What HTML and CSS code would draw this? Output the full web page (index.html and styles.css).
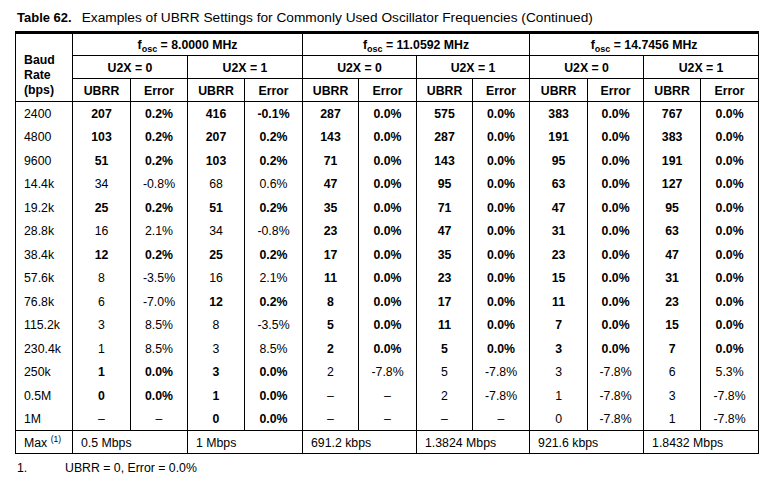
FILE: index.html
```html
<!DOCTYPE html>
<html>
<head>
<meta charset="utf-8">
<link rel="stylesheet" href="styles.css">
</head>
<body>
<div class="page">
  <div class="title"><span class="tnum">Table 62.</span>Examples of UBRR Settings for Commonly Used Oscillator Frequencies (Continued)</div>
  <table class="ubrr">
    <colgroup>
      <col style="width:57px"><col style="width:58px"><col style="width:57px"><col style="width:57px"><col style="width:58px"><col style="width:56px"><col style="width:58px"><col style="width:56px"><col style="width:57px"><col style="width:58px"><col style="width:56px"><col style="width:57px"><col style="width:58px">
    </colgroup>
    <thead>
      <tr class="h1">
        <th rowspan="3" class="label hb">Baud<br>Rate<br>(bps)</th>
        <th colspan="4" class="hb">f<sub>osc</sub> = 8.0000 MHz</th>
        <th colspan="4" class="hb">f<sub>osc</sub> = 11.0592 MHz</th>
        <th colspan="4" class="hb">f<sub>osc</sub> = 14.7456 MHz</th>
      </tr>
      <tr class="h2">
        <th colspan="2" class="hb">U2X = 0</th><th colspan="2" class="hb">U2X = 1</th>
        <th colspan="2" class="hb">U2X = 0</th><th colspan="2" class="hb">U2X = 1</th>
        <th colspan="2" class="hb">U2X = 0</th><th colspan="2" class="hb">U2X = 1</th>
      </tr>
      <tr class="h3">
        <th class="hb">UBRR</th><th class="hb">Error</th><th class="hb">UBRR</th><th class="hb">Error</th>
        <th class="hb">UBRR</th><th class="hb">Error</th><th class="hb">UBRR</th><th class="hb">Error</th>
        <th class="hb">UBRR</th><th class="hb">Error</th><th class="hb">UBRR</th><th class="hb">Error</th>
      </tr>
    </thead>
    <tbody>
      <tr><td class="rate">2400</td><td class="b">207</td><td class="b">0.2%</td><td class="b">416</td><td class="b">-0.1%</td><td class="b">287</td><td class="b">0.0%</td><td class="b">575</td><td class="b">0.0%</td><td class="b">383</td><td class="b">0.0%</td><td class="b">767</td><td class="b">0.0%</td></tr>
      <tr><td class="rate">4800</td><td class="b">103</td><td class="b">0.2%</td><td class="b">207</td><td class="b">0.2%</td><td class="b">143</td><td class="b">0.0%</td><td class="b">287</td><td class="b">0.0%</td><td class="b">191</td><td class="b">0.0%</td><td class="b">383</td><td class="b">0.0%</td></tr>
      <tr><td class="rate">9600</td><td class="b">51</td><td class="b">0.2%</td><td class="b">103</td><td class="b">0.2%</td><td class="b">71</td><td class="b">0.0%</td><td class="b">143</td><td class="b">0.0%</td><td class="b">95</td><td class="b">0.0%</td><td class="b">191</td><td class="b">0.0%</td></tr>
      <tr><td class="rate">14.4k</td><td>34</td><td>-0.8%</td><td>68</td><td>0.6%</td><td class="b">47</td><td class="b">0.0%</td><td class="b">95</td><td class="b">0.0%</td><td class="b">63</td><td class="b">0.0%</td><td class="b">127</td><td class="b">0.0%</td></tr>
      <tr><td class="rate">19.2k</td><td class="b">25</td><td class="b">0.2%</td><td class="b">51</td><td class="b">0.2%</td><td class="b">35</td><td class="b">0.0%</td><td class="b">71</td><td class="b">0.0%</td><td class="b">47</td><td class="b">0.0%</td><td class="b">95</td><td class="b">0.0%</td></tr>
      <tr><td class="rate">28.8k</td><td>16</td><td>2.1%</td><td>34</td><td>-0.8%</td><td class="b">23</td><td class="b">0.0%</td><td class="b">47</td><td class="b">0.0%</td><td class="b">31</td><td class="b">0.0%</td><td class="b">63</td><td class="b">0.0%</td></tr>
      <tr><td class="rate">38.4k</td><td class="b">12</td><td class="b">0.2%</td><td class="b">25</td><td class="b">0.2%</td><td class="b">17</td><td class="b">0.0%</td><td class="b">35</td><td class="b">0.0%</td><td class="b">23</td><td class="b">0.0%</td><td class="b">47</td><td class="b">0.0%</td></tr>
      <tr><td class="rate">57.6k</td><td>8</td><td>-3.5%</td><td>16</td><td>2.1%</td><td class="b">11</td><td class="b">0.0%</td><td class="b">23</td><td class="b">0.0%</td><td class="b">15</td><td class="b">0.0%</td><td class="b">31</td><td class="b">0.0%</td></tr>
      <tr><td class="rate">76.8k</td><td>6</td><td>-7.0%</td><td class="b">12</td><td class="b">0.2%</td><td class="b">8</td><td class="b">0.0%</td><td class="b">17</td><td class="b">0.0%</td><td class="b">11</td><td class="b">0.0%</td><td class="b">23</td><td class="b">0.0%</td></tr>
      <tr><td class="rate">115.2k</td><td>3</td><td>8.5%</td><td>8</td><td>-3.5%</td><td class="b">5</td><td class="b">0.0%</td><td class="b">11</td><td class="b">0.0%</td><td class="b">7</td><td class="b">0.0%</td><td class="b">15</td><td class="b">0.0%</td></tr>
      <tr><td class="rate">230.4k</td><td>1</td><td>8.5%</td><td>3</td><td>8.5%</td><td class="b">2</td><td class="b">0.0%</td><td class="b">5</td><td class="b">0.0%</td><td class="b">3</td><td class="b">0.0%</td><td class="b">7</td><td class="b">0.0%</td></tr>
      <tr><td class="rate">250k</td><td class="b">1</td><td class="b">0.0%</td><td class="b">3</td><td class="b">0.0%</td><td>2</td><td>-7.8%</td><td>5</td><td>-7.8%</td><td>3</td><td>-7.8%</td><td>6</td><td>5.3%</td></tr>
      <tr><td class="rate">0.5M</td><td class="b">0</td><td class="b">0.0%</td><td class="b">1</td><td class="b">0.0%</td><td>–</td><td>–</td><td>2</td><td>-7.8%</td><td>1</td><td>-7.8%</td><td>3</td><td>-7.8%</td></tr>
      <tr class="last"><td class="rate">1M</td><td>–</td><td>–</td><td class="b">0</td><td class="b">0.0%</td><td>–</td><td>–</td><td>–</td><td>–</td><td>0</td><td>-7.8%</td><td>1</td><td>-7.8%</td></tr>
      <tr class="max"><td class="rate">Max <sup>(1)</sup></td><td colspan="2">0.5 Mbps</td><td colspan="2">1 Mbps</td><td colspan="2">691.2 kbps</td><td colspan="2">1.3824 Mbps</td><td colspan="2">921.6 kbps</td><td colspan="2">1.8432 Mbps</td></tr>
    </tbody>
  </table>
  <div class="note"><span class="nnum">1.</span>UBRR = 0, Error = 0.0%</div>
</div>
</body>
</html>
```

FILE: styles.css
```css
html, body {
  margin: 0;
  padding: 0;
  background: #fff;
}
body {
  font-family: "Liberation Sans", Arial, sans-serif;
  color: #000;
}
.page {
  padding: 10px 0 0 15px;
}
.title {
  font-size: 13.7px;
  line-height: 16px;
  height: 21px;
  padding-left: 2px;
  white-space: nowrap;
}
.tnum {
  font-weight: bold;
  font-size: 13px;
  margin-right: 10px;
}
.ubrr {
  table-layout: fixed;
  width: 744px;
  border-collapse: separate;
  border-spacing: 0;
  border-left: 1px solid #000;
  border-top: 3px solid #000;
  font-size: 12.3px;
}
.ubrr th, .ubrr td {
  padding: 0;
  border-right: 1px solid #000;
  text-align: center;
  vertical-align: middle;
  white-space: nowrap;
  line-height: 14px;
}
.ubrr th {
  font-weight: bold;
  padding-top: 1px;
}
.ubrr th.hb {
  border-bottom: 1px solid #000;
}
.ubrr th.label {
  text-align: left;
  vertical-align: bottom;
  padding: 0 0 3px 8px;
  line-height: 15px;
}
.h1 { height: 22px; }
.h2 { height: 23px; }
.h3 { height: 23px; }
.ubrr sub {
  font-size: 9px;
  vertical-align: -3px;
  line-height: 0;
}
.ubrr tbody tr { height: 23.5px; }
.ubrr tbody tr.last { height: 23px; }
.ubrr tr.last td { border-bottom: 1px solid #000; }
.ubrr tr.max { height: 23px; }
.ubrr tr.max td {
  border-bottom: 1px solid #000;
  text-align: left;
  padding: 2px 0 0 8px;
}
.ubrr td.rate {
  text-align: left;
  padding-left: 8px;
}
.ubrr td.b { font-weight: bold; }
.ubrr sup {
  font-size: 8.5px;
  vertical-align: 5px;
  line-height: 0;
}
.note {
  font-size: 12.3px;
  line-height: 14px;
  margin-top: 7px;
  padding-left: 2px;
}
.nnum {
  display: inline-block;
  width: 48px;
}
```
